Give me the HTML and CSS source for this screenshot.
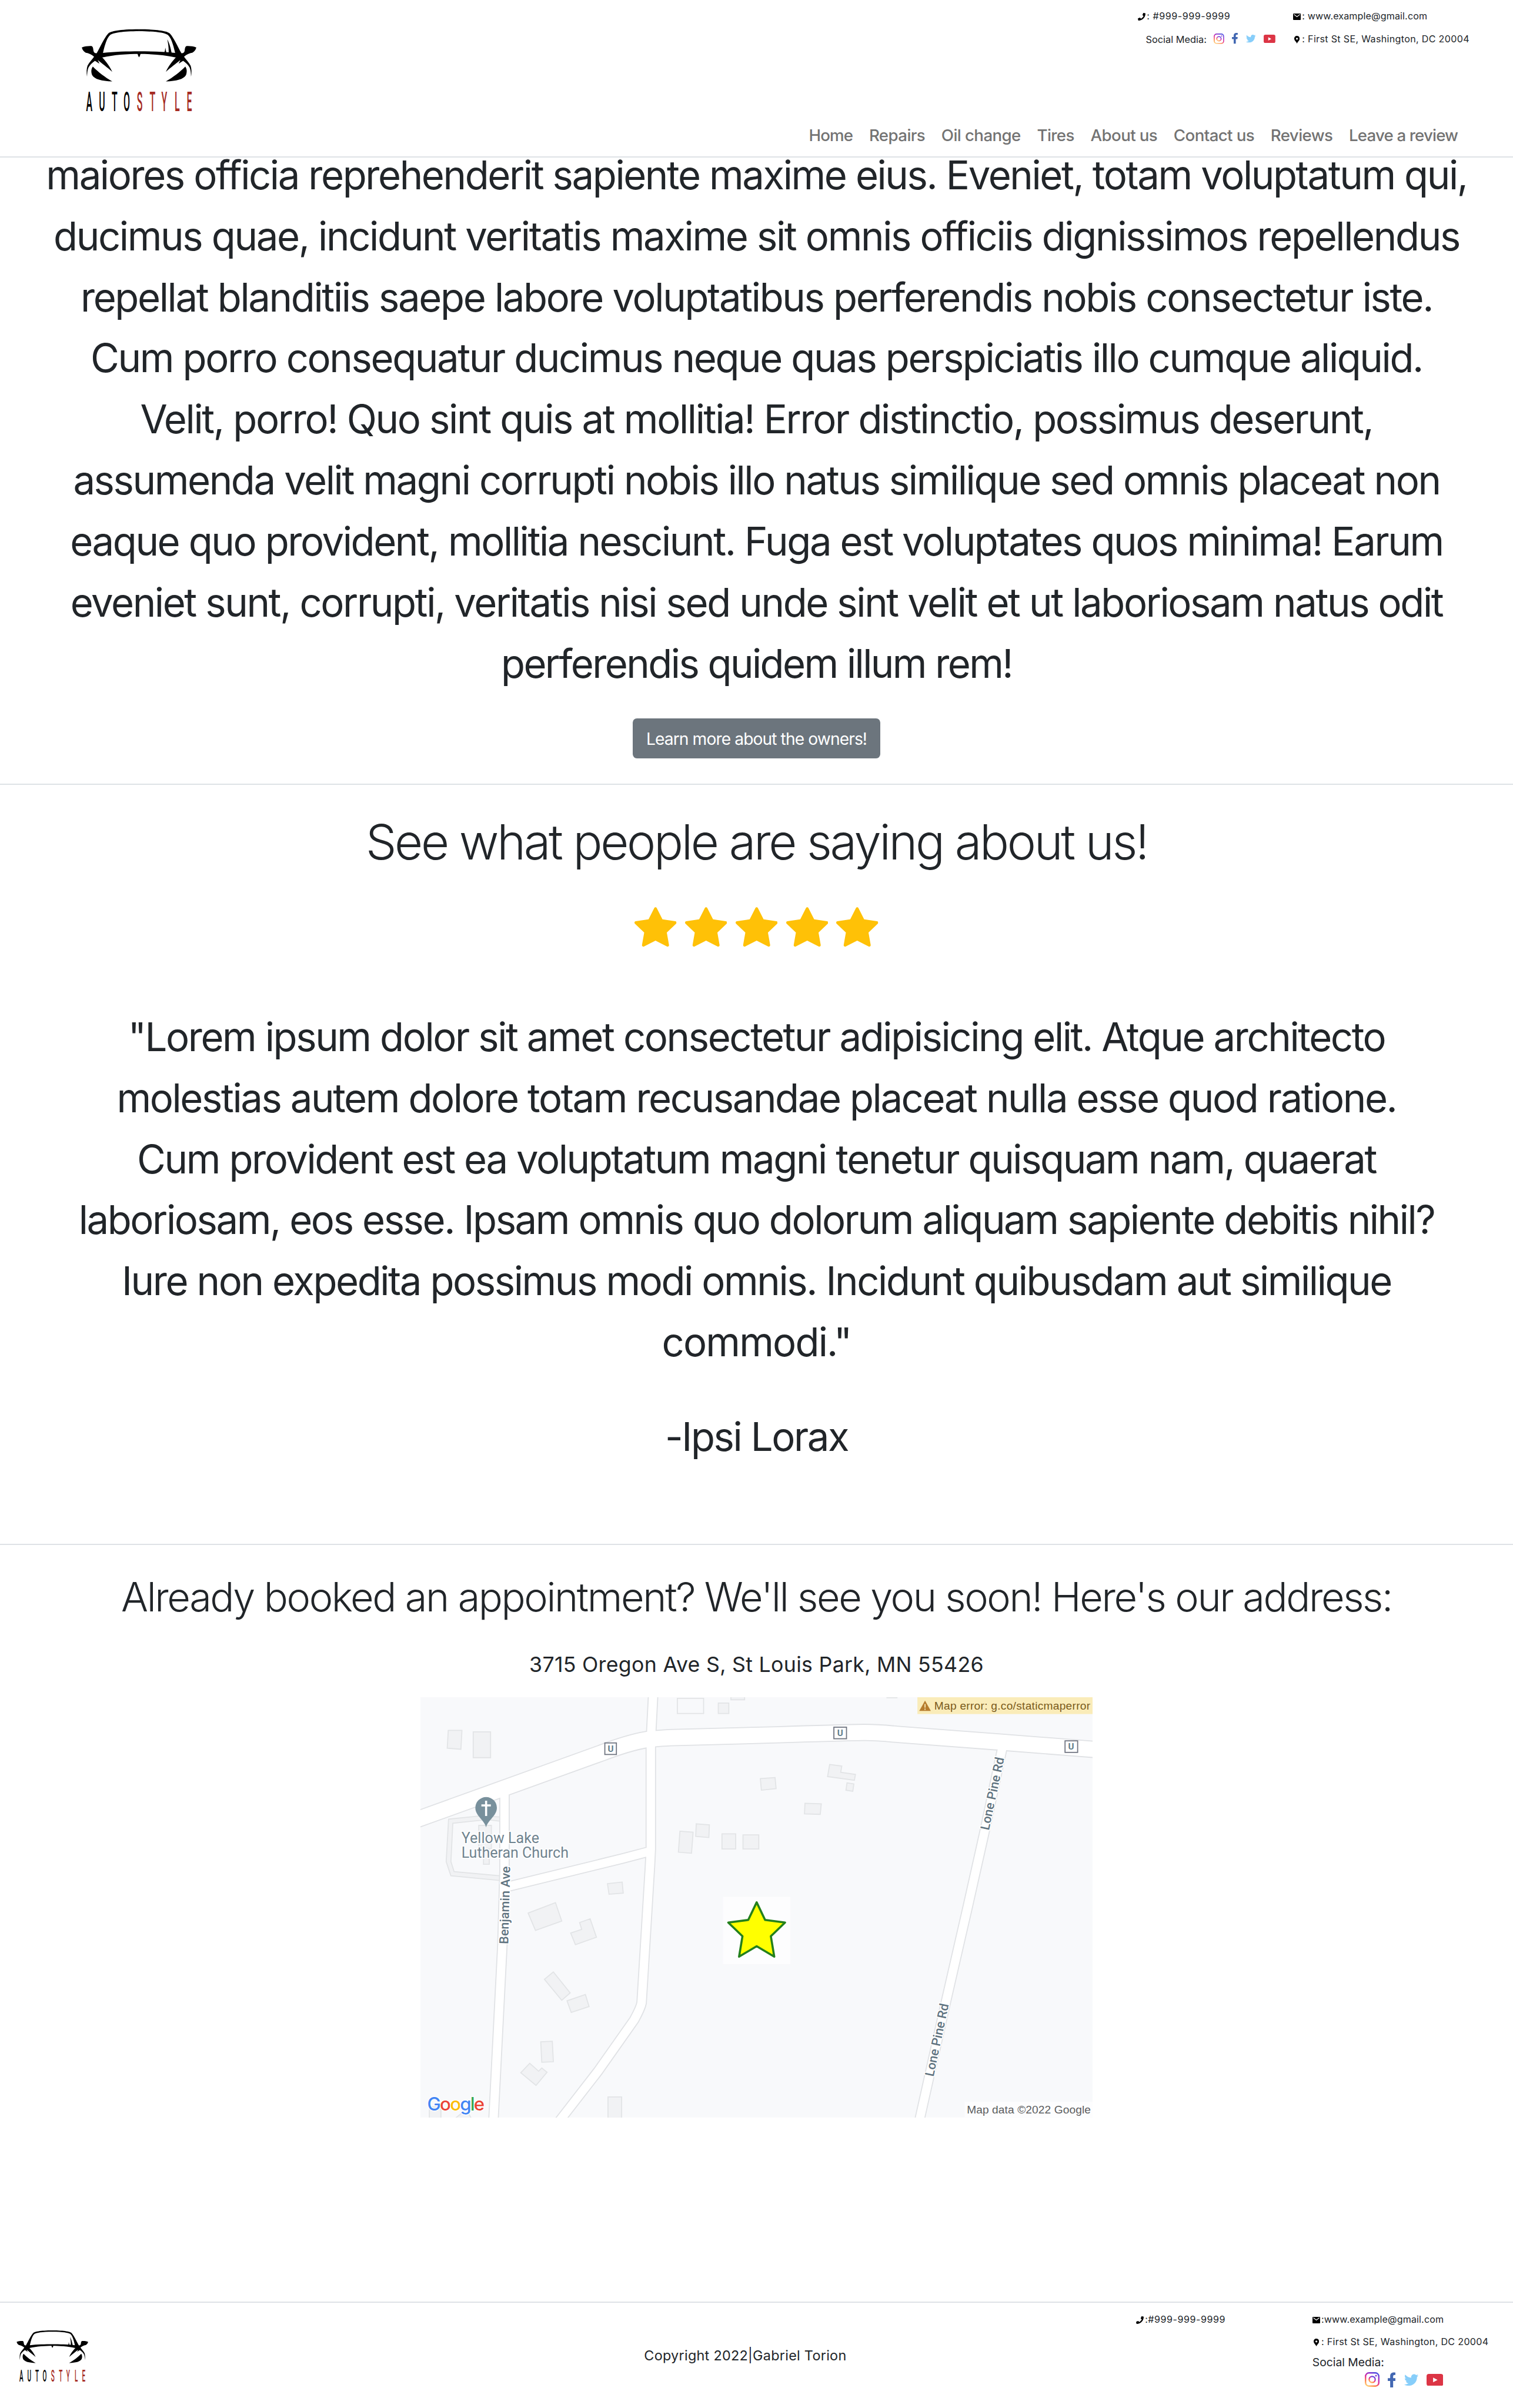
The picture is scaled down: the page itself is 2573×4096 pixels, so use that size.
FILE: index.html
```html
<!DOCTYPE html>
<html lang="en">
<head>
<meta charset="utf-8">
<title>Autostyle</title>
<link rel="stylesheet" href="styles.css">
</head>
<body>
<svg class="defs" aria-hidden="true">
  <defs>
    <linearGradient id="insta" x1="0.2" y1="1" x2="0.75" y2="0">
      <stop offset="0" stop-color="#ffc870"/>
      <stop offset="0.25" stop-color="#ff7a45"/>
      <stop offset="0.5" stop-color="#e0269a"/>
      <stop offset="0.8" stop-color="#8f35cf"/>
      <stop offset="1" stop-color="#4c4be0"/>
    </linearGradient>
    <g id="car-side">
      <path d="M252 303C275 262 295 215 318 190C330 178 380 166 494.500 166V177C400 178 350 185 330 198C312 212 300 250 288 301C350 294 430 292 494.500 292V307C430 307 350 312 284 327C305 350 325 375 341 409C315 385 280 360 258 341L268 362C258 356 250 350 242 346C225 358 212 370 205 385C199 400 198 415 197 437C193 410 194 390 200 373C210 355 225 340 237 323C225 311 205 302 190 300C180 295 170 285 167 270C185 263 205 261 222 262C232 264 232 280 234 290C237 302 245 303 252 303Z"/>
      <path d="M230 379C222 390 218 405 226 428C240 452 280 462 341 464C300 440 260 410 230 379Z"/>
    </g>
    <symbol id="logo" viewBox="160 160 668 486">
      <use href="#car-side"/>
      <use href="#car-side" transform="translate(988 0) scale(-1 1)"/>
      <path d="M485 304H503Q500 318 494 326Q488 318 485 304ZM655 224C668 245 675 275 680 301H663C664 270 660 245 655 224ZM644 271L650 300H638Q643 290 644 271Z"/>
      <g class="logo-word" transform="translate(0 635) scale(.35 1)">
        <text x="600 806 1011 1211" y="0">AUTO</text>
        <text class="red" x="1423 1631 1823 2034 2231" y="0">STYLE</text>
      </g>
    </symbol>
    <symbol id="phone" viewBox="0 0 512 512"><path d="M493.400 24.600l-104-24c-11.300-2.600-22.900 3.300-27.500 13.900l-48 112c-4.200 9.800-1.400 21.300 6.900 28l60.600 49.600c-36 76.700-98.900 140.500-177.200 177.200l-49.600-60.600c-6.800-8.300-18.200-11.100-28-6.900l-112 48C3.900 366.500-2 378.100.6 389.400l24 104C27.100 504.200 36.700 512 48 512c256.100 0 464-207.500 464-464 0-11.200-7.700-20.900-18.600-23.400z"/></symbol>
    <symbol id="mail" viewBox="0 0 30 25"><rect width="30" height="25" rx="2.500"/><path class="cut" d="M3.500 3.500L15 12.500L26.500 3.500"/></symbol>
    <symbol id="pin" viewBox="0 0 20 28"><path fill-rule="evenodd" d="M10 0C4.400 0 0 4.400 0 10C0 17 7.500 21 10 28C12.500 21 20 17 20 10C20 4.400 15.600 0 10 0ZM10 6.500A3.600 3.600 0 1 1 10 13.700A3.600 3.600 0 1 1 10 6.500Z"/></symbol>
    <symbol id="instagram" viewBox="0 0 28 28"><rect x="1.400" y="1.400" width="25.200" height="25.200" rx="6.500" fill="none" stroke="url(#insta)" stroke-width="2.600"/><circle cx="14" cy="14" r="5.800" fill="none" stroke="url(#insta)" stroke-width="2.500"/><circle cx="21.300" cy="6.700" r="1.700" fill="#8a35cf"/></symbol>
    <symbol id="facebook" viewBox="22 0 276 512"><path d="M279.140 288l14.220-92.660h-88.910v-60.130c0-25.350 12.420-50.060 52.240-50.060h40.420V6.260S260.430 0 225.360 0c-73.220 0-121.080 44.380-121.080 124.720v70.620H22.890V288h81.390v224h100.170V288z"/></symbol>
    <symbol id="twitter" viewBox="0 48 512 416"><path d="M459.370 151.716c.325 4.548.325 9.097.325 13.645 0 138.720-105.583 298.558-298.558 298.558-59.452 0-114.680-17.219-161.137-47.106 8.447.974 16.568 1.299 25.340 1.299 49.055 0 94.213-16.568 130.274-44.832-46.132-.975-84.792-31.188-98.112-72.772 6.498.974 12.995 1.624 19.818 1.624 9.421 0 18.843-1.300 27.614-3.573-48.081-9.747-84.143-51.980-84.143-102.985v-1.299c13.969 7.797 30.214 12.670 47.431 13.319-28.264-18.843-46.781-51.005-46.781-87.391 0-19.492 5.197-37.360 14.294-52.954 51.655 63.675 129.300 105.258 216.365 109.807-1.624-7.797-2.599-15.918-2.599-24.040 0-57.828 46.782-104.934 104.934-104.934 30.213 0 57.502 12.670 76.670 33.137 23.715-4.548 46.456-13.320 66.599-25.340-7.798 24.366-24.366 44.833-46.132 57.827 21.117-2.273 41.584-8.122 60.426-16.243-14.292 20.791-32.161 39.308-52.628 54.253z"/></symbol>
    <symbol id="youtube" viewBox="0 0 32 23"><rect width="32" height="23" rx="4.500"/><path fill="#fff" d="M12.500 7L21 11.500L12.500 16Z"/></symbol>
    <symbol id="star" viewBox="0 0 16 16"><path d="M3.612 15.443c-.386.198-.824-.149-.746-.592l.83-4.730L.173 6.765c-.329-.314-.158-.888.283-.950l4.898-.696L7.538.792c.197-.390.730-.390.927 0l2.184 4.327 4.898.696c.441.062.612.636.282.950l-3.522 3.356.83 4.730c.078.443-.360.790-.746.592L8 13.187l-4.389 2.256z"/></symbol>
  </defs>
</svg>

<header class="site-header">
  <svg class="logo"><use href="#logo"/></svg>
  <div class="header-side">
    <div class="contact">
      <p class="contact-item"><svg class="ic phone"><use href="#phone"/></svg><span class="small number">: #999-999-9999</span></p>
      <p class="contact-item"><svg class="ic mail"><use href="#mail"/></svg><span class="small">: www.example@gmail.com</span></p>
      <div class="contact-item social-line">
        <span class="social-label">Social Media:</span>
        <span class="socials"><svg class="instagram"><use href="#instagram"/></svg><svg class="facebook"><use href="#facebook"/></svg><svg class="twitter"><use href="#twitter"/></svg><svg class="youtube"><use href="#youtube"/></svg></span>
      </div>
      <p class="contact-item"><svg class="ic pin"><use href="#pin"/></svg><span class="small place-line">: First St SE, Washington, DC 20004</span></p>
    </div>
    <nav class="nav">
      <a>Home</a><a>Repairs</a><a>Oil change</a><a>Tires</a><a>About us</a><a>Contact us</a><a>Reviews</a><a>Leave a review</a>
    </nav>
  </div>
</header>

<main>
  <section class="about">
    <p class="lead">
      <span class="line">maiores officia reprehenderit sapiente maxime eius. Eveniet, totam voluptatum qui,</span>
      <span class="line loose">ducimus quae, incidunt veritatis maxime sit omnis officiis dignissimos repellendus</span>
      <span class="line loose">repellat blanditiis saepe labore voluptatibus perferendis nobis consectetur iste.</span>
      <span class="line">Cum porro consequatur ducimus neque quas perspiciatis illo cumque aliquid.</span>
      <span class="line loose">Velit, porro! Quo sint quis at mollitia! Error distinctio, possimus deserunt,</span>
      <span class="line">assumenda velit magni corrupti nobis illo natus similique sed omnis placeat non</span>
      <span class="line">eaque quo provident, mollitia nesciunt. Fuga est voluptates quos minima! Earum</span>
      <span class="line">eveniet sunt, corrupti, veritatis nisi sed unde sint velit et ut laboriosam natus odit</span>
      <span class="line tight">perferendis quidem illum rem!</span>
    </p>
    <button class="btn">Learn more about the owners!</button>
  </section>

  <section class="reviews">
    <h1 class="title">See what people are saying about us!</h1>
    <div class="stars"><svg><use href="#star"/></svg><svg><use href="#star"/></svg><svg><use href="#star"/></svg><svg><use href="#star"/></svg><svg><use href="#star"/></svg></div>
    <p class="lead quote">
      <span class="line">"Lorem ipsum dolor sit amet consectetur adipisicing elit. Atque architecto</span>
      <span class="line">molestias autem dolore totam recusandae placeat nulla esse quod ratione.</span>
      <span class="line">Cum provident est ea voluptatum magni tenetur quisquam nam, quaerat</span>
      <span class="line">laboriosam, eos esse. Ipsam omnis quo dolorum aliquam sapiente debitis nihil?</span>
      <span class="line">Iure non expedita possimus modi omnis. Incidunt quibusdam aut similique</span>
      <span class="line last">commodi."</span>
    </p>
    <p class="lead author">-Ipsi Lorax</p>
  </section>

  <section class="location">
    <h2 class="subtitle">Already booked an appointment? We'll see you soon! Here's our address:</h2>
    <p class="address">3715 Oregon Ave S, St Louis Park, MN 55426</p>
    <svg class="map" viewBox="0 0 1280 800">
      <rect width="1280" height="800" fill="#f8f9fb"/>
      <path class="lot" d="M151 228L114 226L53.600 232L49 313L58 340L153 349V340L64 332L58 313L61.600 240L127 233L151 236Z"/>
      <g class="building">
        <path d="M53 63L79 63L77 99L51 97ZM100.500 66h33v49h-33ZM567 11h20v20h-20ZM591 -3h26v8h-26ZM647 155L675 153L677 174L649 177ZM525 241L550 243L549 267L524 265ZM494 255L519 257L516 297L491 295ZM574 260h26v29h-26ZM614 262h30v27h-30ZM356 355L384 352L386 373L359 375Z"/>
        <path d="M111 244h24v44h-24ZM120 288h11v30h-11ZM779 128L802 131L800 143L828 147L826 158L775 151ZM812 163L825 165L823 179L810 177ZM732 202L763 203L761 223L731 222ZM888 -5h19v6h-19Z"/>
        <path d="M205 411L257 391L269 426L219 444ZM303 429L323 422L335 457L295 471L286 449L307 442ZM253 523L285 563L269 577L236 537ZM279 578L314 566L321 589L287 600ZM229 656L251 655L253 694L231 695ZM208 697L225 712L231 706L241 714L220 739L191 715ZM357 761h26v45h-26ZM17 780h22v30h-22ZM66 802L77 793L90 790L97 802Z"/>
        <path class="hollow" d="M489 2h50v29h-50Z"/>
      </g>
      <g class="road edge">
        <path class="main-road" d="M-10 234L345 106Q395 87 429 81Q440 79 475 77L680 71.500Q790 68 845 67Q870 67 900 70L1098 85L1290 100"/>
        <path d="M443 -5L439.500 63L438.500 97V290L437 320L421 582Q419 592 407 614L338 712L262 810M160 185V330L156 471L139 805M165 361L385 307L438 293M1109 90L1074 255L1042 398L1000 581L950 805"/>
      </g>
      <g class="road fill">
        <path class="main-road" d="M-10 234L345 106Q395 87 429 81Q440 79 475 77L680 71.500Q790 68 845 67Q870 67 900 70L1098 85L1290 100"/>
        <path d="M443 -5L439.500 63L438.500 97V290L437 320L421 582Q419 592 407 614L338 712L262 810M160 185V330L156 471L139 805M165 361L385 307L438 293M1109 90L1074 255L1042 398L1000 581L950 805"/>
      </g>
      <g class="shield">
        <rect x="351" y="87" width="22" height="22"/><rect x="787" y="57" width="24" height="22"/><rect x="1227" y="83" width="24" height="22"/>
        <text x="362" y="104">U</text><text x="799" y="74">U</text><text x="1238.500" y="100">U</text>
      </g>
      <path fill="#78909c" d="M125 248C122 234 104.500 226 104.500 210.500A20.500 20.500 0 0 1 145.500 210.500C145.500 226 128 234 125 248Z"/>
      <path d="M125 197V226M116 206H134" stroke="#fff" stroke-width="4"/>
      <g class="place"><text x="78" y="278" textLength="148">Yellow Lake</text><text x="78" y="306" textLength="204">Lutheran Church</text></g>
      <g class="street">
        <text transform="translate(167 470) rotate(-88.500)" textLength="148">Benjamin Ave</text>
        <text transform="translate(1082 254) rotate(-78)" textLength="141">Lone Pine Rd</text>
        <text transform="translate(976.500 723) rotate(-78)" textLength="141">Lone Pine Rd</text>
      </g>
      <rect x="576" y="380" width="128" height="128" fill="#fdfdfe"/>
      <path d="M640 390.500L656 424L694 429L667 455L673.500 494L640 474L606.500 494L613 455L586 429L624 424Z" fill="#ff0" stroke="#23801c" stroke-width="4" stroke-linejoin="round"/>
      <text class="google" x="13" y="787" textLength="109"><tspan fill="#4285f4">G</tspan><tspan fill="#ea4335">o</tspan><tspan fill="#fbbc05">o</tspan><tspan fill="#4285f4">g</tspan><tspan fill="#34a853">l</tspan><tspan fill="#ea4335">e</tspan></text>
      <rect x="1036" y="770" width="244" height="30" fill="#fdfdfe"/>
      <text class="credit" x="1040" y="792" textLength="236">Map data ©2022 Google</text>
      <rect x="946" width="334" height="32" fill="#faecb9"/>
      <path d="M960.500 6.500L971.500 26H949.500Z" fill="#b77d2e"/>
      <path d="M960.500 13V20M960.500 21.500V24" stroke="#faecb9" stroke-width="2"/>
      <text class="warning" x="978" y="23.500" textLength="297">Map error: g.co/staticmaperror</text>
    </svg>
  </section>
</main>

<footer class="site-footer">
  <svg class="logo"><use href="#logo"/></svg>
  <p class="copyright">Copyright 2022|Gabriel Torion</p>
  <p class="contact-item"><svg class="ic phone"><use href="#phone"/></svg><span class="small number">:#999-999-9999</span></p>
  <div class="footer-contact">
    <p class="contact-item"><svg class="ic mail"><use href="#mail"/></svg><span class="small">:www.example@gmail.com</span></p>
    <p class="contact-item"><svg class="ic pin"><use href="#pin"/></svg><span class="small place-line">: First St SE, Washington, DC 20004</span></p>
    <p class="social-label">Social Media:</p>
    <div class="socials"><svg class="instagram"><use href="#instagram"/></svg><svg class="facebook"><use href="#facebook"/></svg><svg class="twitter"><use href="#twitter"/></svg><svg class="youtube"><use href="#youtube"/></svg></div>
  </div>
</footer>
</body>
</html>
```
FILE: styles.css
```css
/* 1rem is 100 units of a 2880-unit wide layout */
html {
  font-size: 89.3403px;
}

*,
*::before,
*::after {
  box-sizing: border-box;
}

body {
  margin: 0;
  background: #fff;
  color: #212529;
  font-family: Inter, "Noto Sans", sans-serif;
  font-size: 0.32rem;
  overflow-x: hidden;
}

p,
h1,
h2 {
  margin: 0;
  font-weight: 400;
}

svg {
  display: block;
  flex: none;
}

.defs {
  position: absolute;
  width: 0;
  height: 0;
}

.site-header {
  position: relative;
  z-index: 1;
  display: flex;
  justify-content: space-between;
  align-items: flex-start;
  height: 3rem;
  padding: 0.158rem 1.05rem 0 1.533rem;
  background: #fff;
  border-bottom: 2px solid #dee2e6;
}

.logo {
  width: 2.227rem;
  height: 1.62rem;
}

.site-header .logo {
  margin-top: 0.375rem;
}

.logo-word {
  font-family: Roboto, sans-serif;
  font-size: 153px;
  font-weight: 500;
  text-anchor: middle;
}

.red {
  fill: #a52a22;
}

.header-side {
  display: flex;
  flex-direction: column;
  align-items: flex-end;
}

.contact {
  display: grid;
  grid-template-columns: 2.955rem 3.4rem;
  row-gap: 0.13rem;
  margin-right: -0.265rem;
}

.contact-item {
  display: flex;
  align-items: center;
  height: 0.3rem;
  line-height: 0.3rem;
  white-space: nowrap;
}

.small {
  font-size: 0.18rem;
  letter-spacing: 0.008em;
}

.number {
  letter-spacing: 0.034em;
}

.place-line {
  letter-spacing: 0.02em;
}

.ic {
  margin-top: 0.03rem;
}

.ic.phone {
  width: 0.145rem;
  height: 0.145rem;
  margin-right: 0.025rem;
}

.ic.mail {
  width: 0.148rem;
  height: 0.123rem;
  margin-right: 0.022rem;
}

.ic.pin {
  width: 0.104rem;
  height: 0.148rem;
  margin: 0.03rem 0.046rem 0 0.02rem;
}

.cut {
  fill: none;
  stroke: #fff;
  stroke-width: 2.4;
}

.social-line {
  padding-left: 0.15rem;
}

.social-label {
  font-size: 0.183rem;
}

.social-line .social-label {
  width: 1.295rem;
  margin-top: 0.03rem;
}

.socials {
  display: flex;
  align-items: center;
}

.instagram {
  width: 0.2rem;
  height: 0.2rem;
}

.facebook {
  width: 0.112rem;
  height: 0.208rem;
  margin: 0 0.152rem 0.005rem 0.15rem;
  fill: #4267b2;
}

.twitter {
  width: 0.186rem;
  height: 0.152rem;
  margin-right: 0.15rem;
  fill: #87cefa;
}

.youtube {
  width: 0.223rem;
  height: 0.16rem;
  fill: #dc3545;
}

.nav {
  display: flex;
  gap: 0.31rem;
  margin-top: 1.452rem;
  line-height: 0.48rem;
  font-size: 0.31rem;
  font-weight: 500;
  letter-spacing: -0.022em;
  color: #737373;
  white-space: nowrap;
}

.nav a:first-child,
.nav a:last-child {
  letter-spacing: -0.031em;
}

.about,
.reviews,
.location {
  display: flex;
  flex-direction: column;
  align-items: center;
}

.about {
  height: 12.19rem;
  margin-top: -0.25rem;
  border-bottom: 2px solid #dee2e6;
}

.lead {
  font-size: 0.75rem;
  line-height: 1.163rem;
  letter-spacing: -0.0361em;
  text-align: center;
  white-space: nowrap;
}

.line {
  display: block;
}

.about .line {
  letter-spacing: -0.0359em;
}

.about .loose {
  letter-spacing: -0.0352em;
}

.about .tight {
  letter-spacing: -0.0385em;
}

.quote .last {
  letter-spacing: -0.027em;
}

.btn {
  width: 4.72rem;
  height: 0.76rem;
  margin-top: 0.463rem;
  padding: 0.02rem 0 0;
  border: 0;
  border-radius: 0.08rem;
  background: #6c757d;
  color: #fff;
  font: 400 0.316rem/0.74rem Inter, sans-serif;
  letter-spacing: -0.0325em;
}

.reviews {
  height: 14.48rem;
  border-bottom: 2px solid #dee2e6;
}

.title {
  margin-top: 0.53rem;
  font-size: 0.93rem;
  font-weight: 300;
  line-height: 1.12rem;
  letter-spacing: -0.04em;
  white-space: nowrap;
}

.stars {
  display: flex;
  gap: 0.16rem;
  margin-top: 0.655rem;
  fill: #ffc107;
}

.stars svg {
  width: 0.8rem;
  height: 0.8rem;
}

.quote {
  margin-top: 1.115rem;
}

.author {
  margin-top: 0.636rem;
}

.location {
  height: 14.4rem;
}

.subtitle {
  margin-top: 0.51rem;
  font-size: 0.765rem;
  font-weight: 300;
  line-height: 0.96rem;
  letter-spacing: -0.0348em;
  white-space: nowrap;
}

.address {
  margin-top: 0.51rem;
  font-size: 0.4rem;
  line-height: 0.6rem;
  letter-spacing: 0.0078em;
  white-space: nowrap;
}

.map {
  width: 12.8rem;
  height: 8rem;
  margin-top: 0.32rem;
}

.lot,
.building {
  fill: #f1f2f4;
  stroke: #e2e4e6;
  stroke-width: 2;
}

.hollow {
  fill: #f8f9fb;
}

.road {
  fill: none;
}

.edge {
  stroke: #e0e2e5;
  stroke-width: 20;
}

.edge .main-road {
  stroke-width: 33;
}

.road.fill {
  stroke: #fff;
  stroke-width: 16;
}

.fill .main-road {
  stroke-width: 29;
}

.shield rect {
  fill: #fff;
  stroke: #6f7480;
  stroke-width: 2;
}

.shield text {
  font: 700 17px Roboto, sans-serif;
  fill: #607d8b;
  text-anchor: middle;
}

.place,
.street {
  font-family: Roboto, sans-serif;
  fill: #6f838f;
  stroke: #fff;
  stroke-width: 4;
  stroke-linejoin: round;
  paint-order: stroke;
}

.place {
  font-size: 28px;
}

.street {
  font-size: 24px;
  font-weight: 500;
  fill: #5f7380;
}

.google {
  font: 500 35px Inter, sans-serif;
  stroke: #fff;
  stroke-width: 3;
  paint-order: stroke;
}

.credit,
.warning {
  font: 21.500px "Liberation Sans", Arial, sans-serif;
}

.credit {
  fill: #5c5d5f;
}

.warning {
  fill: #7a5b1c;
}

.site-footer {
  display: grid;
  grid-template-columns: 11.957rem 9.365rem 3.356rem 1fr;
  align-items: start;
  height: 2.02rem;
  padding: 0.168rem 0 0 0.303rem;
  border-top: 2px solid #dee2e6;
}

.site-footer .logo {
  width: 1.39rem;
  height: 1.011rem;
  margin-top: 0.352rem;
}

.copyright {
  margin-top: 0.645rem;
  font-size: 0.262rem;
  line-height: 0.4rem;
  letter-spacing: 0.0116em;
}

.footer-contact .contact-item + .contact-item {
  margin-top: 0.13rem;
}

.footer-contact .social-label {
  margin-top: 0.07rem;
  font-size: 0.216rem;
  line-height: 0.34rem;
}

.footer-contact .socials {
  margin: 0.01rem 0 0 0.995rem;
}

.footer-contact .instagram {
  width: 0.28rem;
  height: 0.28rem;
}

.footer-contact .facebook {
  width: 0.155rem;
  height: 0.3rem;
  margin: 0 0.16rem 0 0.155rem;
}

.footer-contact .twitter {
  width: 0.271rem;
  height: 0.23rem;
  margin-right: 0.153rem;
}

.footer-contact .youtube {
  width: 0.318rem;
  height: 0.23rem;
}
```
